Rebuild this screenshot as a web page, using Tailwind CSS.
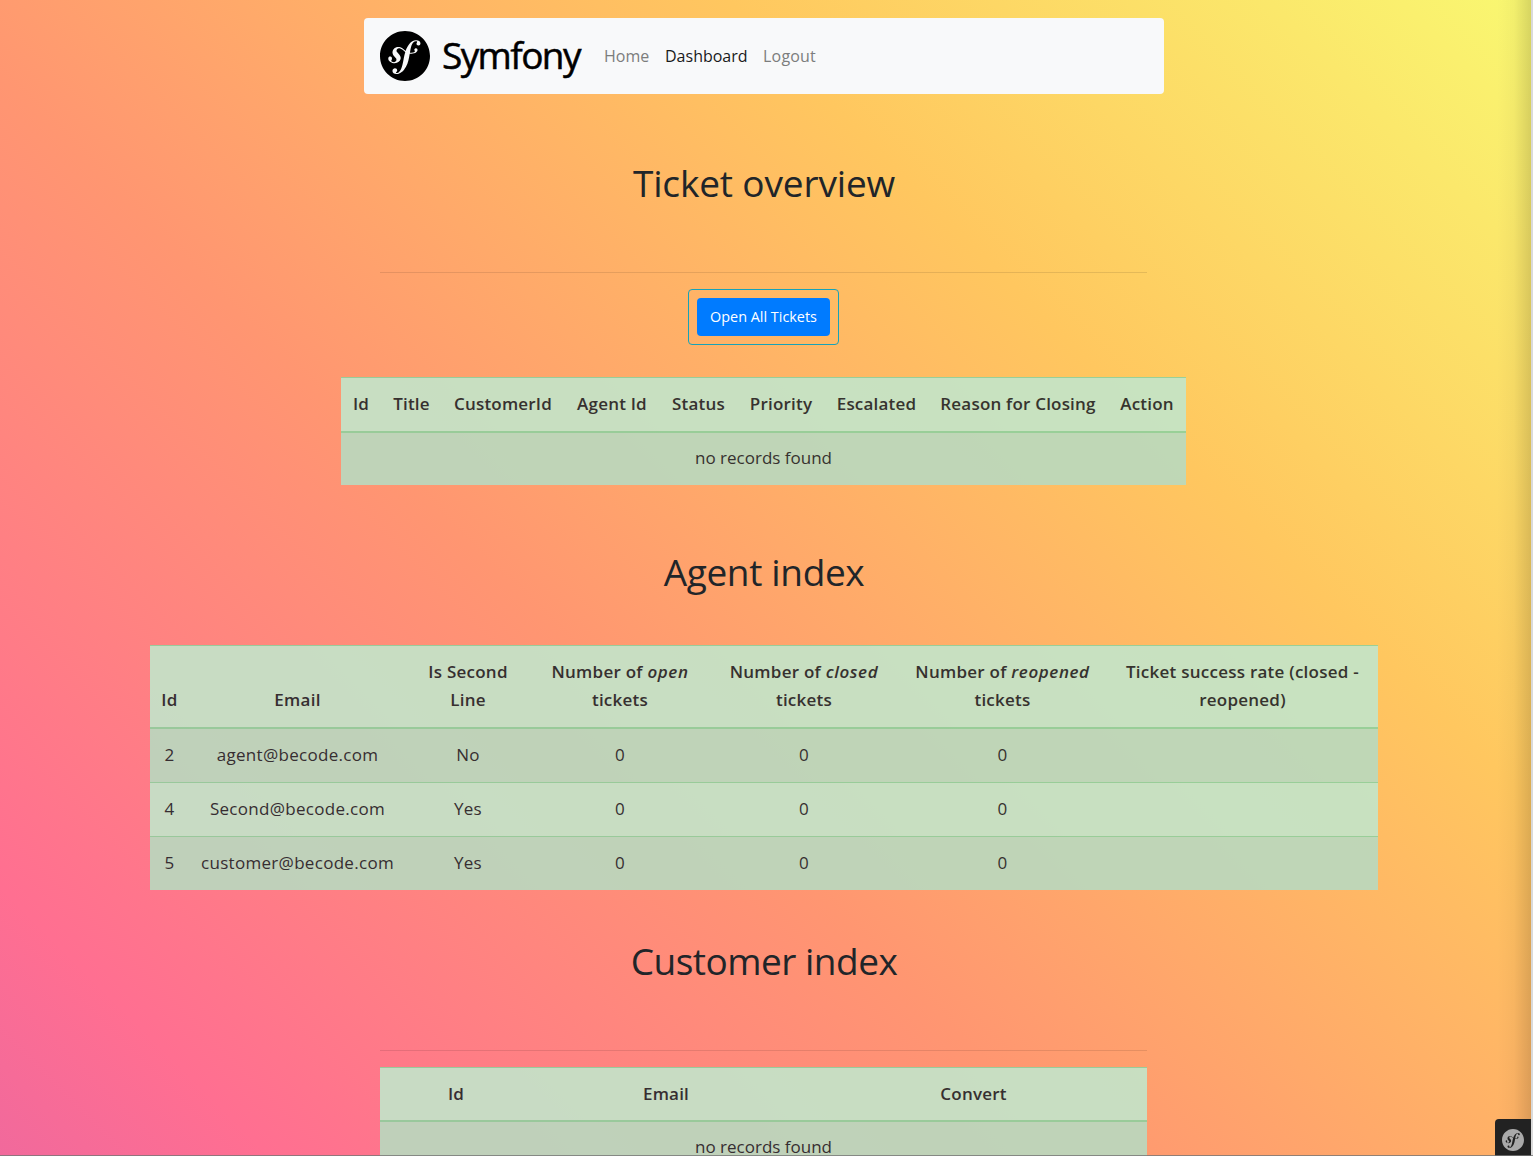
<!DOCTYPE html>
<html lang="en">
<head>
<meta charset="utf-8">
<title>Ticket overview</title>
<script src="https://cdn.jsdelivr.net/npm/@tailwindcss/browser@4"></script>
</head>
<body class="h-[1156px] overflow-hidden font-['Open_Sans',sans-serif] text-[#212529]">
<svg class="hidden"><symbol id="sf" viewBox="0 0 24 24"><path d="M24 12c0 6.628-5.372 12-12 12S0 18.628 0 12 5.372 0 12 0s12 5.372 12 12zm-6.753-7.561c-1.22.042-2.283.715-3.075 1.644-.878 1.02-1.461 2.229-1.881 3.461-.753-.614-1.332-1.414-2.539-1.761-.966-.297-2.015-.105-2.813.514-.41.319-.71.757-.861 1.254-.36 1.176.381 2.225.719 2.6l.737.79c.15.154.519.56.339 1.138-.193.631-.951 1.037-1.732.799-.348-.106-.848-.366-.734-.73.045-.15.152-.263.21-.391.052-.11.077-.194.095-.242.141-.465-.053-1.07-.551-1.223-.465-.143-.939-.03-1.125.566-.209.68.117 1.913 1.86 2.449 2.04.628 3.765-.484 4.011-1.932.154-.907-.256-1.582-1.006-2.447l-.612-.677c-.371-.37-.497-1.002-.114-1.485.324-.409.785-.584 1.539-.379 1.103.3 1.594 1.063 2.412 1.68-.338 1.11-.56 2.223-.759 3.222l-.123.746c-.585 3.07-1.033 4.757-2.194 5.726-.234.166-.57.416-1.073.434-.266.005-.352-.176-.355-.257-.006-.184.15-.271.255-.353.154-.083.39-.224.372-.674-.016-.532-.456-.994-1.094-.973-.477.017-1.203.465-1.176 1.286.028.85.819 1.485 2.012 1.444.638-.021 2.062-.281 3.464-1.949 1.633-1.911 2.09-4.101 2.434-5.706l.383-2.117c.213.024.441.042.69.048 2.032.044 3.049-1.01 3.064-1.776.01-.464-.304-.921-.744-.91-.386.009-.718.278-.806.654-.094.428.646.813.068 1.189-.41.266-1.146.452-2.184.3l.188-1.042c.386-1.976.859-4.407 2.661-4.467.132-.007.612.006.623.323.003.105-.022.134-.147.375-.115.155-.174.345-.168.537.017.504.4.836.957.816.743-.023.955-.748.945-1.119-.032-.874-.952-1.424-2.17-1.386z"/></symbol></svg>
<div class="relative h-[1156px] w-full overflow-hidden bg-[linear-gradient(45deg,#d65db1_-378px,#ff6f91_192px,#ff9671_762px,#ffc75f_1332px,#f9f871_1901px)]">
<main class="flex w-[1528px] flex-col items-center">

<nav class="mt-[18px] flex h-[76px] w-[800px] items-center rounded bg-[#f8f9fa] px-4">
<svg class="size-[50px] fill-black"><use href="#sf"/></svg>
<span class="ml-3 -mt-[3px] h-[52px] w-[138px] whitespace-nowrap text-[37px] leading-[52px] tracking-[-1.600px] text-black [-webkit-text-stroke:.5px_black]">Symfony</span>
<div class="ml-6 flex gap-4 text-[16px] leading-7 text-[#7c7d7d]">
<a class="w-[45px]">Home</a><a class="w-[82px] text-[#191a1a]">Dashboard</a><a class="tracking-[.2px]">Logout</a>
</div>
</nav>

<h1 class="mt-[65px] h-[48px] text-[37px] leading-[48px] tracking-[-.15px]">Ticket overview</h1>
<div class="mt-[65px] mr-px h-px w-[767px] bg-black/10"></div>
<div class="mt-4 mr-px h-[56px] w-[151px] rounded border border-[#17a2b8] p-2">
<a class="flex h-[38px] w-[133px] items-center justify-center rounded bg-[#007bff] text-[14.400px] text-white">Open All Tickets</a>
</div>

<table class="mt-8 ml-[341px] w-[845px] table-fixed border-separate border-spacing-0 self-start bg-[#c3e6cb] text-center text-[17px] leading-7 opacity-90">
<colgroup><col class="w-[40px]"><col class="w-[61px]"><col class="w-[122px]"><col class="w-[96px]"><col class="w-[77px]"><col class="w-[88px]"><col class="w-[103px]"><col class="w-[180px]"><col class="w-[78px]"></colgroup>
<thead><tr class="h-[56px] tracking-[.2px] whitespace-nowrap *:border-t *:border-b-2 *:border-[#8fd19e] *:p-0 *:pb-px *:font-semibold"><th>Id</th><th>Title</th><th>CustomerId</th><th>Agent Id</th><th>Status</th><th>Priority</th><th>Escalated</th><th>Reason for Closing</th><th>Action</th></tr></thead>
<tbody><tr class="h-[52px] bg-black/5"><td colspan="9" class="p-0 pb-0.5">no records found</td></tr></tbody>
</table>

<h1 class="mt-[63px] h-[48px] text-[37px] leading-[48px] tracking-[-.35px]">Agent index</h1>
<table class="mt-[49px] ml-[150px] w-[1228px] table-fixed border-separate border-spacing-0 self-start bg-[#c3e6cb] text-center text-[17px] leading-7 opacity-90">
<colgroup><col class="w-[39px]"><col class="w-[217px]"><col class="w-[124px]"><col class="w-[180px]"><col class="w-[188px]"><col class="w-[209px]"><col class="w-[271px]"></colgroup>
<thead><tr class="h-[84px] tracking-[.25px] whitespace-nowrap align-bottom *:border-t *:border-b-2 *:border-[#8fd19e] *:p-0 *:pb-[13px] *:font-semibold"><th>Id</th><th>Email</th><th>Is Second<br>Line</th><th>Number of <i class="tracking-[.600px]">open</i><br>tickets</th><th>Number of <i class="tracking-[.600px]">closed</i><br>tickets</th><th>Number of <i class="tracking-[.600px]">reopened</i><br>tickets</th><th>Ticket success rate (closed -<br>reopened)</th></tr></thead>
<tbody>
<tr class="h-[53px] bg-black/5 tracking-[.3px] *:p-0 *:pb-px"><td>2</td><td>agent@becode.com</td><td>No</td><td>0</td><td>0</td><td>0</td><td></td></tr>
<tr class="h-[54px] tracking-[.3px] *:border-t *:border-[#8fd19e] *:p-0 *:pb-px"><td>4</td><td>Second@becode.com</td><td>Yes</td><td>0</td><td>0</td><td>0</td><td></td></tr>
<tr class="h-[54px] bg-black/5 tracking-[.3px] *:border-t *:border-[#8fd19e] *:p-0 *:pb-px"><td>5</td><td>customer@becode.com</td><td>Yes</td><td>0</td><td>0</td><td>0</td><td></td></tr>
</tbody>
</table>

<h1 class="mt-[47px] h-[48px] text-[37px] leading-[48px] tracking-[-.5px]">Customer index</h1>
<div class="mt-[65px] mr-px h-px w-[767px] bg-black/10"></div>
<table class="mt-4 ml-[380px] w-[767px] table-fixed border-separate border-spacing-0 self-start bg-[#c3e6cb] text-center text-[17px] leading-7 opacity-90">
<colgroup><col class="w-[152px]"><col class="w-[268px]"><col class="w-[347px]"></colgroup>
<thead><tr class="h-[55px] tracking-[.2px] *:border-t *:border-b-2 *:border-[#8fd19e] *:p-0 *:font-semibold"><th>Id</th><th>Email</th><th>Convert</th></tr></thead>
<tbody><tr class="h-[52px] bg-black/5"><td colspan="3" class="p-0 pb-0.5">no records found</td></tr></tbody>
</table>
</main>

<div class="absolute top-0 right-[2px] h-full w-[34px] bg-linear-to-r from-transparent via-black/3 to-black/14"></div>
<div class="absolute right-[2px] bottom-0 flex h-[37px] w-[36px] items-center justify-center rounded-tl bg-[#222] pt-1"><svg class="size-[22px] fill-[#aaa]"><use href="#sf"/></svg></div>
<div class="absolute top-0 right-0 h-full w-[2px] bg-[#dadada]"></div>
<div class="absolute bottom-0 left-0 h-px w-full bg-[#777]/80"></div>
</div>
</body>
</html>
